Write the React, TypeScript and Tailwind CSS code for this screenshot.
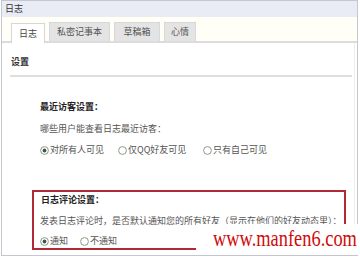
import React from "react";

function Radio({ on }: { on?: boolean }) {
  return (
    <svg width="9" height="9" viewBox="0 0 9 9" className="shrink-0">
      <circle cx="4.5" cy="4.5" r="3.9" fill="#fff" stroke="#7f8f80" strokeWidth="0.9" />
      {on && <circle cx="4.5" cy="4.5" r="1.9" fill="#3f5a44" />}
    </svg>
  );
}

function Opt({ on, label, w }: { on?: boolean; label: string; w: string }) {
  return (
    <div className={`flex items-center gap-[1px] ${w}`}>
      <Radio on={on} />
      <span className="text-[9px] leading-[14px] text-[#555]">{label}</span>
    </div>
  );
}

export default function App() {
  return (
    <div className="relative w-[360px] h-[258px] bg-white overflow-hidden font-['Noto_Sans_CJK_SC',sans-serif]">
      <div className="ml-[1px] w-[357px] h-[256px] border border-[#c4c7cf] flex flex-col">
        <div className="h-[16px] bg-[#e9ebf5] pl-[3px] flex items-center text-[9px] text-[#333]">日志</div>
        <div className="h-[26px] bg-[#fffef7] border-b-2 border-[#dcdcdc] flex items-end pl-[9px] gap-[4px]">
          <div className="w-[34px] h-[20px] bg-white border border-b-0 border-[#d6d6d6] -mb-[2px] flex items-center justify-center text-[9px] text-[#444]">日志</div>
          <div className="w-[61px] h-[19px] bg-[#e4e4e4] border border-b-0 border-[#d8d8d8] flex items-center justify-center text-[9px] text-[#555]">私密记事本</div>
          <div className="w-[46px] h-[19px] bg-[#e4e4e4] border border-b-0 border-[#d8d8d8] flex items-center justify-center text-[9px] text-[#555]">草稿箱</div>
          <div className="w-[32px] h-[19px] bg-[#e4e4e4] border border-b-0 border-[#d8d8d8] flex items-center justify-center text-[9px] text-[#555]">心情</div>
        </div>
        <div className="flex-1 bg-white border-r border-[#ececec] mr-[2px] flex flex-col">
          <div className="mt-[12px] ml-[9px] h-[14px] leading-[14px] text-[9px] font-bold text-[#333]">设置</div>
          <div className="mt-[6px] ml-[8px] w-[342px] h-[2px] bg-[#dedede]" />
          <div className="ml-[38px] flex flex-col">
            <div className="mt-[23px] h-[14px] leading-[14px] text-[9px] font-bold text-[#222]">最近访客设置：</div>
            <div className="mt-[8px] h-[14px] leading-[14px] text-[9px] text-[#555]">哪些用户能查看日志最近访客：</div>
            <div className="mt-[7px] h-[14px] flex items-center">
              <Opt on label="对所有人可见" w="w-[78px]" />
              <Opt label="仅QQ好友可见" w="w-[85px]" />
              <Opt label="只有自己可见" w="w-[80px]" />
            </div>
          </div>
          <div className="mt-[33px] ml-[30px] w-[314px] h-[60px] border-2 border-[#b02a36] pl-[6px] flex flex-col">
            <div className="mt-[1px] h-[14px] leading-[14px] text-[9px] font-bold text-[#222] pl-[1px]">日志评论设置：</div>
            <div className="mt-[7px] h-[14px] leading-[14px] text-[9px] text-[#555] whitespace-nowrap">发表日志评论时，是否默认通知您的所有好友（显示在他们的好友动态里）：</div>
            <div className="mt-[6px] h-[14px] flex items-center">
              <Opt on label="通知" w="w-[40px]" />
              <Opt label="不通知" w="w-[40px]" />
            </div>
          </div>
        </div>
      </div>
      <div className="absolute left-[196px] top-[224px] w-[164px] h-[31px] bg-white">
        <div className="absolute left-[17px] top-[0px] origin-left scale-x-80 whitespace-nowrap font-['Liberation_Serif',serif] text-[23px] leading-[30px] text-[#d10a0a]">www.manfen6.com</div>
      </div>
    </div>
  );
}
